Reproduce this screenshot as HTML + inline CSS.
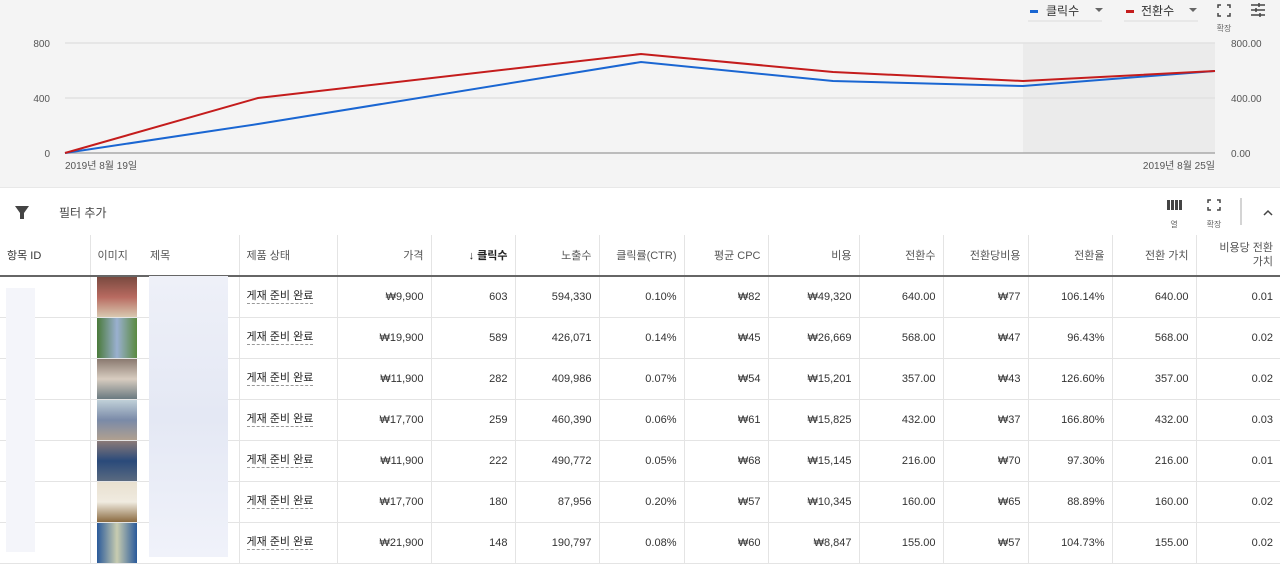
<!DOCTYPE html>
<html><head><meta charset="utf-8"><style>
*{margin:0;padding:0;box-sizing:border-box}
body{width:1280px;height:564px;overflow:hidden;background:#fff;font-family:"Liberation Sans","Noto Sans CJK KR",sans-serif;color:#333;font-size:11px;position:relative}
.chart{position:absolute;left:0;top:0;width:1280px;height:187px;background:#f4f4f4}
.tb{position:absolute;top:187px;left:0;width:1280px;height:48px;background:#fff;border-top:1px solid #e8e8e8}
table{position:absolute;top:235px;left:0;border-collapse:collapse;table-layout:fixed;width:1280px}
td,th{border-right:1px solid #e4e4e4;border-bottom:1px solid #e4e4e4;font-weight:normal;text-align:right;padding:0 7px;font-size:11px;color:#333;white-space:nowrap}
th{height:41px;color:#555;border-bottom:2px solid #666}
td{height:41px}
th.l,td.l{text-align:left}
.st{border-bottom:1px dashed #999;padding-bottom:1px;color:#222;position:relative;top:-2px}
.img{display:block;width:40px;height:40px;margin-left:0}
</style></head><body>
<div class="chart">
<svg width="1280" height="187" style="position:absolute;left:0;top:0">
<rect x="1023" y="43" width="192" height="110" fill="#ebebeb"/>
<line x1="65" y1="43" x2="1215" y2="43" stroke="#e2e2e2" stroke-width="1.5"/>
<line x1="65" y1="98" x2="1215" y2="98" stroke="#e2e2e2" stroke-width="1.5"/>
<line x1="65" y1="153" x2="1215" y2="153" stroke="#aaa" stroke-width="1.5"/>
<polyline points="65,153 258,124 641,62 833,81 1023,86 1215,71" fill="none" stroke="#1a66d2" stroke-width="2"/>
<polyline points="65,153 258,98 641,54 833,72 1023,81 1215,71" fill="none" stroke="#c41c1c" stroke-width="2"/>
<g font-family="Liberation Sans,Noto Sans CJK KR,sans-serif" font-size="10" fill="#555">
<text x="50" y="47" text-anchor="end">800</text>
<text x="50" y="102" text-anchor="end">400</text>
<text x="50" y="157" text-anchor="end">0</text>
<text x="1231" y="47">800.00</text>
<text x="1231" y="102">400.00</text>
<text x="1231" y="157">0.00</text>
<text x="65" y="169">2019년 8월 19일</text>
<text x="1215" y="169" text-anchor="end">2019년 8월 25일</text>
</g>
<rect x="1030" y="10" width="8" height="3" fill="#1a66d2"/>
<text x="1046" y="15" font-size="12" fill="#333" font-family="Liberation Sans,Noto Sans CJK KR,sans-serif">클릭수</text>
<path d="M1095 8l4 4 4-4z" fill="#666"/>
<line x1="1028" y1="21" x2="1102" y2="21" stroke="#ddd"/>
<rect x="1126" y="10" width="8" height="3" fill="#c41c1c"/>
<text x="1141" y="15" font-size="12" fill="#333" font-family="Liberation Sans,Noto Sans CJK KR,sans-serif">전환수</text>
<path d="M1189 8l4 4 4-4z" fill="#666"/>
<line x1="1124" y1="21" x2="1198" y2="21" stroke="#ddd"/>
<path d="M1218 8v-3h3M1227 5h3v3M1230 13v3h-3M1221 16h-3v-3" fill="none" stroke="#444" stroke-width="1.5"/>
<text x="1224" y="31" font-size="8" fill="#666" text-anchor="middle" font-family="Noto Sans CJK KR,sans-serif">확장</text>
<path d="M1251 5h14M1251 10h14M1251 15h14" stroke="#444" stroke-width="1.5"/>
<path d="M1259 3v4M1256 8v4M1260 13v4" stroke="#444" stroke-width="1.5"/>
</svg>
</div>
<div class="tb">
<svg width="1280" height="48" style="position:absolute;left:0;top:0">
<path d="M15 18h14l-5 7v6h-4v-6z" fill="#444"/>
<text x="59" y="29" font-size="12" fill="#444" font-family="Liberation Sans,Noto Sans CJK KR,sans-serif">필터 추가</text>
<path d="M1167 12h3v10h-3zM1171 12h3v10h-3zM1175 12h3v10h-3zM1179 12h3v10h-3z" fill="#444"/>
<text x="1174" y="39" font-size="8" fill="#666" text-anchor="middle" font-family="Noto Sans CJK KR,sans-serif">열</text>
<path d="M1208 15v-3h3M1217 12h3v3M1220 19v3h-3M1211 22h-3v-3" fill="none" stroke="#444" stroke-width="1.5"/>
<text x="1214" y="39" font-size="8" fill="#666" text-anchor="middle" font-family="Noto Sans CJK KR,sans-serif">확장</text>
<line x1="1241" y1="10" x2="1241" y2="37" stroke="#aaa"/>
<path d="M1264 27l4-4 4 4" fill="none" stroke="#444" stroke-width="1.5"/>
</svg>
</div>
<table>
<colgroup><col style="width:90px"><col style="width:58px"><col style="width:91px"><col style="width:98px"><col style="width:94px"><col style="width:84px"><col style="width:84px"><col style="width:85px"><col style="width:84px"><col style="width:91px"><col style="width:84px"><col style="width:85px"><col style="width:84px"><col style="width:84px"><col style="width:84px"></colgroup>
<tr><th class="l" style="color:#333">항목 ID</th><th class="l" style="border-right:none">이미지</th><th class="l" style="padding-left:2px">제목</th><th class="l">제품 상태</th><th>가격</th><th style="color:#222;font-weight:bold">↓ 클릭수</th><th>노출수</th><th>클릭률(CTR)</th><th>평균 CPC</th><th>비용</th><th>전환수</th><th>전환당비용</th><th>전환율</th><th>전환 가치</th><th style="line-height:14px;border-right:none">비용당 전환<br>가치</th></tr>
<tr><td></td><td style="border-right:none;padding:0 0 0 6px"><div class="img" style="background:linear-gradient(#7a4a40,#b86a60 50%,#d8c8b0)"></div></td><td></td><td class="l"><span class="st">게재 준비 완료</span></td><td>₩9,900</td><td>603</td><td>594,330</td><td>0.10%</td><td>₩82</td><td>₩49,320</td><td>640.00</td><td>₩77</td><td>106.14%</td><td>640.00</td><td style="border-right:none">0.01</td></tr>
<tr><td></td><td style="border-right:none;padding:0 0 0 6px"><div class="img" style="background:linear-gradient(90deg,#4a7a3a,#9ab0d0 50%,#5a8a40)"></div></td><td></td><td class="l"><span class="st">게재 준비 완료</span></td><td>₩19,900</td><td>589</td><td>426,071</td><td>0.14%</td><td>₩45</td><td>₩26,669</td><td>568.00</td><td>₩47</td><td>96.43%</td><td>568.00</td><td style="border-right:none">0.02</td></tr>
<tr><td></td><td style="border-right:none;padding:0 0 0 6px"><div class="img" style="background:linear-gradient(#8a7a70,#d8ccc0 50%,#6a7a80)"></div></td><td></td><td class="l"><span class="st">게재 준비 완료</span></td><td>₩11,900</td><td>282</td><td>409,986</td><td>0.07%</td><td>₩54</td><td>₩15,201</td><td>357.00</td><td>₩43</td><td>126.60%</td><td>357.00</td><td style="border-right:none">0.02</td></tr>
<tr><td></td><td style="border-right:none;padding:0 0 0 6px"><div class="img" style="background:linear-gradient(#c0d0d8,#7a8aa8 50%,#b0a090)"></div></td><td></td><td class="l"><span class="st">게재 준비 완료</span></td><td>₩17,700</td><td>259</td><td>460,390</td><td>0.06%</td><td>₩61</td><td>₩15,825</td><td>432.00</td><td>₩37</td><td>166.80%</td><td>432.00</td><td style="border-right:none">0.03</td></tr>
<tr><td></td><td style="border-right:none;padding:0 0 0 6px"><div class="img" style="background:linear-gradient(#8a7a78,#2a4a7a 50%,#5a6a80)"></div></td><td></td><td class="l"><span class="st">게재 준비 완료</span></td><td>₩11,900</td><td>222</td><td>490,772</td><td>0.05%</td><td>₩68</td><td>₩15,145</td><td>216.00</td><td>₩70</td><td>97.30%</td><td>216.00</td><td style="border-right:none">0.01</td></tr>
<tr><td></td><td style="border-right:none;padding:0 0 0 6px"><div class="img" style="background:linear-gradient(#e8e0d0,#f0ebe0 50%,#8a6a40)"></div></td><td></td><td class="l"><span class="st">게재 준비 완료</span></td><td>₩17,700</td><td>180</td><td>87,956</td><td>0.20%</td><td>₩57</td><td>₩10,345</td><td>160.00</td><td>₩65</td><td>88.89%</td><td>160.00</td><td style="border-right:none">0.02</td></tr>
<tr><td></td><td style="border-right:none;padding:0 0 0 6px"><div class="img" style="background:linear-gradient(90deg,#2a5a9a,#c8ccb0 50%,#2a5a9a)"></div></td><td></td><td class="l"><span class="st">게재 준비 완료</span></td><td>₩21,900</td><td>148</td><td>190,797</td><td>0.08%</td><td>₩60</td><td>₩8,847</td><td>155.00</td><td>₩57</td><td>104.73%</td><td>155.00</td><td style="border-right:none">0.02</td></tr>
</table>
<div style="position:absolute;left:6px;top:288px;width:29px;height:264px;background:#f4f5fa"></div>
<div style="position:absolute;left:149px;top:276px;width:79px;height:281px;background:linear-gradient(#eef0f8,#e4e8f4,#f0f2fa)"></div>
</body></html>
